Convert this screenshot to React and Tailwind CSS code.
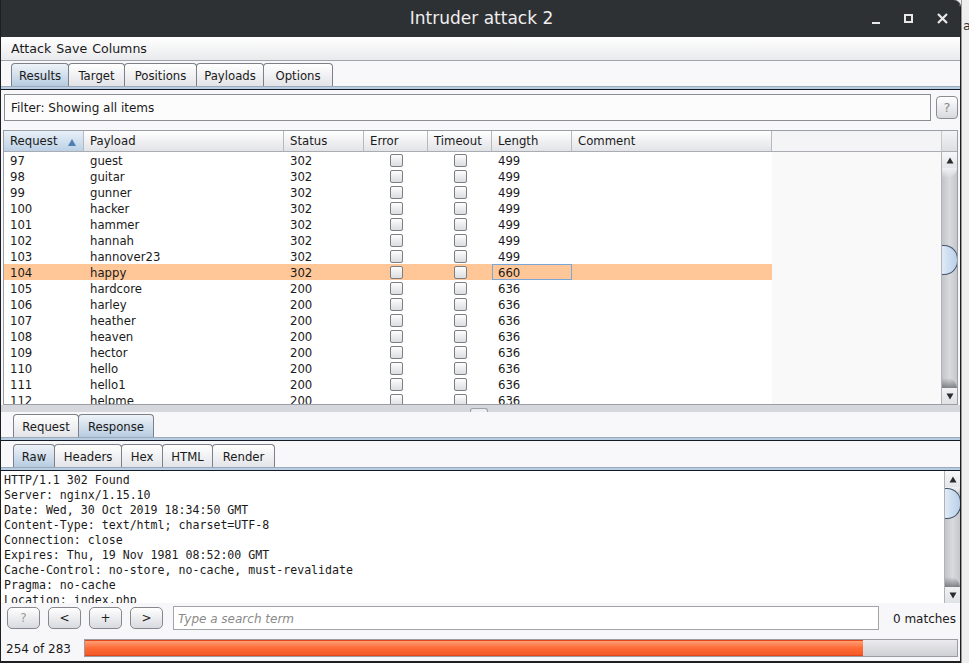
import React from 'react'

const rows = [
  [97, 'guest', 302, 499],
  [98, 'guitar', 302, 499],
  [99, 'gunner', 302, 499],
  [100, 'hacker', 302, 499],
  [101, 'hammer', 302, 499],
  [102, 'hannah', 302, 499],
  [103, 'hannover23', 302, 499],
  [104, 'happy', 302, 660],
  [105, 'hardcore', 200, 636],
  [106, 'harley', 200, 636],
  [107, 'heather', 200, 636],
  [108, 'heaven', 200, 636],
  [109, 'hector', 200, 636],
  [110, 'hello', 200, 636],
  [111, 'hello1', 200, 636],
  [112, 'helpme', 200, 636],
]

const responseLines = [
  'HTTP/1.1 302 Found',
  'Server: nginx/1.15.10',
  'Date: Wed, 30 Oct 2019 18:34:50 GMT',
  'Content-Type: text/html; charset=UTF-8',
  'Connection: close',
  'Expires: Thu, 19 Nov 1981 08:52:00 GMT',
  'Cache-Control: no-store, no-cache, must-revalidate',
  'Pragma: no-cache',
  'Location: index.php',
]

const Tab = ({ label, width, active }) => (
  <div
    className={`h-full flex items-center justify-center pt-[3px] border border-b-0 border-[#7d8088] rounded-t-[4px] -ml-px first:ml-0 ${
      active
        ? 'bg-gradient-to-b from-[#eef3f8] to-[#b7cce1]'
        : 'bg-gradient-to-b from-white to-[#e3e4e8]'
    }`}
    style={{ width }}
  >
    {label}
  </div>
)

const TabStrip = ({ tabs, active, left }) => (
  <div className="flex flex-col">
    <div className="h-[23px] flex" style={{ paddingLeft: left }}>
      {tabs.map(([label, w]) => (
        <Tab key={label} label={label} width={w} active={label === active} />
      ))}
    </div>
    <div className="h-[3px] bg-[#b8cde2] border-t border-[#9aaabb]" />
    <div className="h-px bg-[#141b26]" />
  </div>
)

const Arrow = ({ up }) => (
  <svg width="8" height="7" viewBox="0 0 8 7">
    <polygon points={up ? '4,0.5 7.5,6.5 0.5,6.5' : '0.5,0.5 7.5,0.5 4,6.5'} fill="#2b2b2b" />
  </svg>
)

const ScrollBar = ({ thumbTop, thumbHeight }) => (
  <div className="w-[16px] h-full flex flex-col bg-gradient-to-r from-[#c3c4c9] via-[#d9dadd] to-[#c6c7cc] border-l border-[#b0b2b7]">
    <div className="h-[16px] flex items-center justify-center bg-gradient-to-b from-[#f7f7f9] to-[#e4e5e8]">
      <Arrow up />
    </div>
    <div className="flex-1 relative overflow-hidden">
      <div className="absolute left-0 right-0 top-0 h-[10px] bg-gradient-to-b from-[#f2f2f4] to-transparent rounded-br-[12px]" />
      <div
        className="absolute left-0 right-[-1px] rounded-r-[14px] border border-l-0 border-[#44536a] bg-gradient-to-r from-[#dfeaf6] to-[#b9d0e8]"
        style={{ top: thumbTop, height: thumbHeight }}
      />
      <div className="absolute left-0 right-0 bottom-0 h-[10px] bg-gradient-to-t from-[#5a5d64] to-transparent rounded-tr-[10px] opacity-70" />
    </div>
    <div className="h-[16px] flex items-center justify-center bg-gradient-to-b from-[#f2f2f4] to-[#e0e1e4]">
      <Arrow />
    </div>
  </div>
)

const Check = () => (
  <div className="w-[13px] h-[13px] rounded-[2px] border border-[#7b7e84] bg-gradient-to-b from-[#fdfdfd] to-[#dcdde0]" />
)

const cols = [
  ['Request', 80],
  ['Payload', 200],
  ['Status', 80],
  ['Error', 64],
  ['Timeout', 64],
  ['Length', 80],
  ['Comment', 200],
]

const Button = ({ children, muted }) => (
  <div
    className={`w-[33px] h-[22px] flex items-center justify-center rounded-[5px] border border-[#86888d] bg-gradient-to-b from-white to-[#d9dadf] ${
      muted ? 'text-[#9a9a9a]' : 'text-[#222]'
    }`}
  >
    {children}
  </div>
)

export default function App() {
  return (
    <div className="w-[969px] h-[663px] flex overflow-hidden bg-[#eeeeee] font-['DejaVu_Sans',sans-serif] text-[#1a1a1a]">
      {/* Window */}
      <div className="w-[961px] h-[663px] flex flex-col bg-[#f8f8fa] border-l border-r border-[#1e1f21] rounded-tr-[7px] overflow-hidden">
        {/* Title bar */}
        <div className="h-[37px] shrink-0 flex items-center bg-[#2e3134] text-[#eeeeee] relative">
          <div className="flex-1 text-center text-[17px] pl-[2px]">Intruder attack 2</div>
          <div className="absolute right-[12px] top-0 h-full flex items-center gap-[24px]">
            <div className="w-[8px] h-[2px] bg-[#e8e8e8] mt-[8px]" />
            <div className="w-[9px] h-[9px] border-2 border-[#e8e8e8]" />
            <svg width="11" height="11" viewBox="0 0 11 11">
              <path d="M1 1L10 10M10 1L1 10" stroke="#e8e8e8" strokeWidth="2.2" />
            </svg>
          </div>
        </div>

        {/* Menu */}
        <div className="h-[24px] shrink-0 flex items-center gap-[5px] pl-[10px] pt-[1px] text-[12.6px] bg-gradient-to-b from-white to-[#e9eaed] border-b border-[#a2a4a9]">
          <span>Attack</span>
          <span>Save</span>
          <span>Columns</span>
        </div>

        {/* Top tabs */}
        <div className="h-[28px] shrink-0 pt-[2px] text-[11.7px]">
          <TabStrip
            left={10}
            active="Results"
            tabs={[
              ['Results', 58],
              ['Target', 57],
              ['Positions', 73],
              ['Payloads', 68],
              ['Options', 70],
            ]}
          />
        </div>

        {/* Filter */}
        <div className="h-[41px] shrink-0 flex items-start gap-[5px] pl-[3px] pr-[2px] pt-[5px]">
          <div className="w-[927px] h-[27px] flex items-center pl-[6px] text-[12px] bg-[#fcfcfc] border border-[#8b8d92]">
            Filter: Showing all items
          </div>
          <div className="w-[22px] h-[23px] mt-[2px] flex items-center justify-center rounded-[4px] border border-[#8b8d92] bg-gradient-to-b from-white to-[#d8d9de] text-[13px] text-[#8a8a8a]">
            ?
          </div>
        </div>

        {/* Results table */}
        <div className="h-[275px] shrink-0 ml-[2px] mr-[2px] flex border border-[#9a9ea6] text-[11.7px] bg-[#f9f9fa]">
          <div className="flex-1 flex flex-col overflow-hidden">
            <div className="h-[21px] shrink-0 flex border-b border-[#a9acb2] bg-[#f4f4f6]">
              {cols.map(([name, w], i) => (
                <div
                  key={name}
                  className={`h-full flex items-center justify-between pt-[2px] pl-[6px] pr-[7px] border-r border-[#b7b9be] ${
                    i === 0
                      ? 'bg-gradient-to-b from-[#e8f0f8] to-[#bcd1e5]'
                      : 'bg-gradient-to-b from-white to-[#e2e3e7]'
                  }`}
                  style={{ width: w }}
                >
                  <span>{name}</span>
                  {i === 0 && (
                    <svg width="8" height="7" viewBox="0 0 8 7">
                      <polygon points="4,0 8,7 0,7" fill="#4d7fb3" />
                    </svg>
                  )}
                </div>
              ))}
            </div>
            <div className="flex-1 overflow-hidden">
              {rows.map(([id, payload, status, length]) => {
                const sel = id === 104
                return (
                  <div
                    key={id}
                    className={`h-[16px] w-[768px] flex items-center ${sel ? 'bg-[#ffc797]' : 'bg-white'}`}
                  >
                    <div className="w-[80px] pl-[6px] pt-[3px]">{id}</div>
                    <div className="w-[200px] pl-[6px] pt-[3px]">{payload}</div>
                    <div className="w-[80px] pl-[6px] pt-[3px]">{status}</div>
                    <div className="w-[64px] flex justify-center">
                      <Check />
                    </div>
                    <div className="w-[64px] flex justify-center">
                      <Check />
                    </div>
                    <div
                      className={`w-[80px] h-full flex items-center pl-[5px] pt-[3px] ${
                        sel ? 'border border-[#7aa6d8]' : 'border border-transparent'
                      }`}
                    >
                      {length}
                    </div>
                    <div className="w-[200px]" />
                  </div>
                )
              })}
            </div>
          </div>
          <div className="w-[16px] flex flex-col">
            <div className="h-[21px] shrink-0 bg-gradient-to-b from-[#f4f4f6] to-[#dddee2] border-b border-[#a9acb2] border-l border-l-[#c4c6ca]" />
            <div className="flex-1">
              <ScrollBar thumbTop={77} thumbHeight={30} />
            </div>
          </div>
        </div>

        {/* Splitter */}
        <div className="h-[8px] shrink-0 flex flex-col">
          <div className="h-[7px] bg-[#d6d7dc] flex justify-center items-end">
            <div className="w-[18px] h-[4px] ml-[-4px] rounded-t-[3px] border border-b-0 border-[#9ea1a7] bg-[#eceef1]" />
          </div>
        </div>

        {/* Request / Response tabs */}
        <div className="h-[28px] shrink-0 pt-[1px] text-[11.7px]">
          <TabStrip
            left={12}
            active="Response"
            tabs={[
              ['Request', 66],
              ['Response', 76],
            ]}
          />
        </div>

        {/* Raw / Headers tabs */}
        <div className="h-[30px] shrink-0 pt-[3px] text-[11.7px]">
          <TabStrip
            left={12}
            active="Raw"
            tabs={[
              ['Raw', 42],
              ['Headers', 68],
              ['Hex', 42],
              ['HTML', 51],
              ['Render', 63],
            ]}
          />
        </div>

        {/* Response body */}
        <div className="h-[132px] shrink-0 flex bg-white">
          <div className="flex-1 overflow-hidden pl-[3px] pt-[2px] font-['DejaVu_Sans_Mono',monospace] text-[11.6px] leading-[15px]">
            {responseLines.map((l) => (
              <div key={l} className="whitespace-pre">
                {l}
              </div>
            ))}
          </div>
          <div className="w-[16px] h-full">
            <ScrollBar thumbTop={1} thumbHeight={31} />
          </div>
        </div>

        {/* Search row */}
        <div className="h-[30px] shrink-0 flex items-center pl-[6px] pr-[4px] text-[12px] bg-[#f7f7f9]">
          <div className="flex gap-[8px]">
            <Button muted>?</Button>
            <Button>&lt;</Button>
            <Button>+</Button>
            <Button>&gt;</Button>
          </div>
          <div className="ml-[10px] w-[706px] h-[24px] flex items-center pl-[4px] pt-px bg-white border border-[#a2a4a9] italic text-[#8a8a8a]">
            Type a search term
          </div>
          <div className="ml-auto pt-px">0 matches</div>
        </div>

        {/* Status */}
        <div className="h-[28px] shrink-0 flex items-center pl-[5px] pr-[2px] text-[12px] bg-[#f7f7f9]">
          <div className="w-[78px] pt-[3px]">254 of 283</div>
          <div className="flex-1 h-[18px] mt-[1px] flex border border-[#9a9ca1] bg-gradient-to-b from-[#ebebee] to-[#cfd0d5]">
            <div
              className="h-full border-y border-[#e2461c] bg-gradient-to-b from-[#ff9e73] via-[#ff6a36] to-[#f25a27]"
              style={{ width: `${0.892 * 100}%` }}
            />
          </div>
        </div>

        <div className="h-[2px] shrink-0 bg-[#1e1f21]" />
      </div>

      {/* Desktop behind the window */}
      <div className="flex-1 h-full border-l border-[#9a9a9a] bg-[#eeeeee] overflow-hidden">
        <div className="mt-[16px] pl-px text-[13px] text-[#333]">a</div>
      </div>
    </div>
  )
}
